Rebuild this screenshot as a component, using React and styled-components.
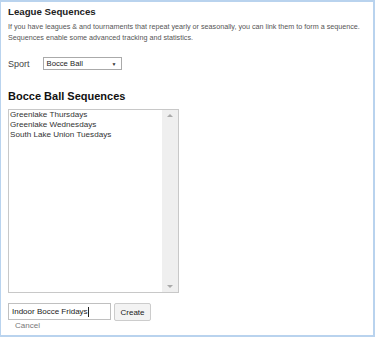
import React from "react";
import styled, { createGlobalStyle } from "styled-components";

const Global = createGlobalStyle`
  html, body { margin: 0; padding: 0; background: #fff; }
  body { font-family: "Liberation Sans", Arial, sans-serif; }
`;

const Panel = styled.div`
  box-sizing: border-box;
  width: 375px;
  height: 337px;
  border: 1px solid #b9d3ee;
  border-right-width: 2px;
  border-bottom-width: 2px;
  border-top-width: 2px;
  padding: 4px 7px 0 7px;
  background: #fff;
`;

const Title = styled.h1`
  margin: 0;
  font-size: 9.7px;
  font-weight: bold;
  color: #222;
  line-height: 12px;
`;

const Desc = styled.p`
  margin: 3px 0 0 0;
  font-size: 7.2px;
  line-height: 11px;
  color: #555;
  white-space: nowrap;
`;

const SportRow = styled.div`
  display: flex;
  align-items: center;
  gap: 13px;
  margin-top: 14px;
`;

const Label = styled.span`
  font-size: 9px;
  color: #444;
`;

const Select = styled.div`
  box-sizing: border-box;
  width: 79px;
  height: 13px;
  border: 1px solid #aaa;
  display: flex;
  align-items: center;
  justify-content: space-between;
  padding: 0 4px 0 3px;
  font-size: 7.7px;
  color: #222;
`;

const Arrow = styled.span`
  font-size: 5px;
  color: #333;
`;

const Heading = styled.h2`
  margin: 19px 0 0 0;
  font-size: 11px;
  font-weight: bold;
  color: #111;
  line-height: 14px;
`;

const ListBox = styled.div`
  box-sizing: border-box;
  margin-top: 6px;
  width: 171px;
  height: 184px;
  border: 1px solid #c8c8c8;
  display: flex;
`;

const Items = styled.div`
  flex: 1;
  padding: 0 1px;
`;

const Item = styled.div`
  font-size: 8.1px;
  line-height: 10px;
  color: #333;
`;

const Scroll = styled.div`
  width: 16px;
  background: #efefef;
  display: flex;
  flex-direction: column;
  justify-content: space-between;
  align-items: center;
  padding: 4px 0;
`;

const ScrollArrow = styled.div`
  width: 0;
  height: 0;
  border-left: 3px solid transparent;
  border-right: 3px solid transparent;
  ${(p) =>
    p.$down
      ? "border-top: 3px solid #aaa;"
      : "border-bottom: 3px solid #aaa;"}
`;

const CreateRow = styled.div`
  display: flex;
  gap: 3px;
  margin-top: 10px;
  align-items: flex-start;
`;

const Input = styled.div`
  box-sizing: border-box;
  width: 103px;
  height: 17px;
  border: 1px solid #c0c0c0;
  font-size: 8px;
  color: #222;
  display: flex;
  align-items: center;
  padding-left: 3px;
`;

const Caret = styled.span`
  display: inline-block;
  width: 1px;
  height: 10px;
  background: #222;
`;

const Button = styled.div`
  box-sizing: border-box;
  width: 37px;
  height: 18px;
  border: 1px solid #ccc;
  border-radius: 2px;
  background: #f3f3f3;
  font-size: 8px;
  color: #222;
  display: flex;
  align-items: center;
  justify-content: center;
`;

const Cancel = styled.div`
  margin: 0 0 0 7px;
  font-size: 8px;
  line-height: 10px;
  color: #777;
`;

export default function App() {
  return (
    <>
      <Global />
      <Panel>
        <Title>League Sequences</Title>
        <Desc>
          If you have leagues &amp; and tournaments that repeat yearly or seasonally, you can link them to form a sequence.
          <br />
          Sequences enable some advanced tracking and statistics.
        </Desc>
        <SportRow>
          <Label>Sport</Label>
          <Select>
            <span>Bocce Ball</span>
            <Arrow>▼</Arrow>
          </Select>
        </SportRow>
        <Heading>Bocce Ball Sequences</Heading>
        <ListBox>
          <Items>
            <Item>Greenlake Thursdays</Item>
            <Item>Greenlake Wednesdays</Item>
            <Item>South Lake Union Tuesdays</Item>
          </Items>
          <Scroll>
            <ScrollArrow />
            <ScrollArrow $down />
          </Scroll>
        </ListBox>
        <CreateRow>
          <Input>
            Indoor Bocce Fridays<Caret />
          </Input>
          <Button>Create</Button>
        </CreateRow>
        <Cancel>Cancel</Cancel>
      </Panel>
    </>
  );
}
